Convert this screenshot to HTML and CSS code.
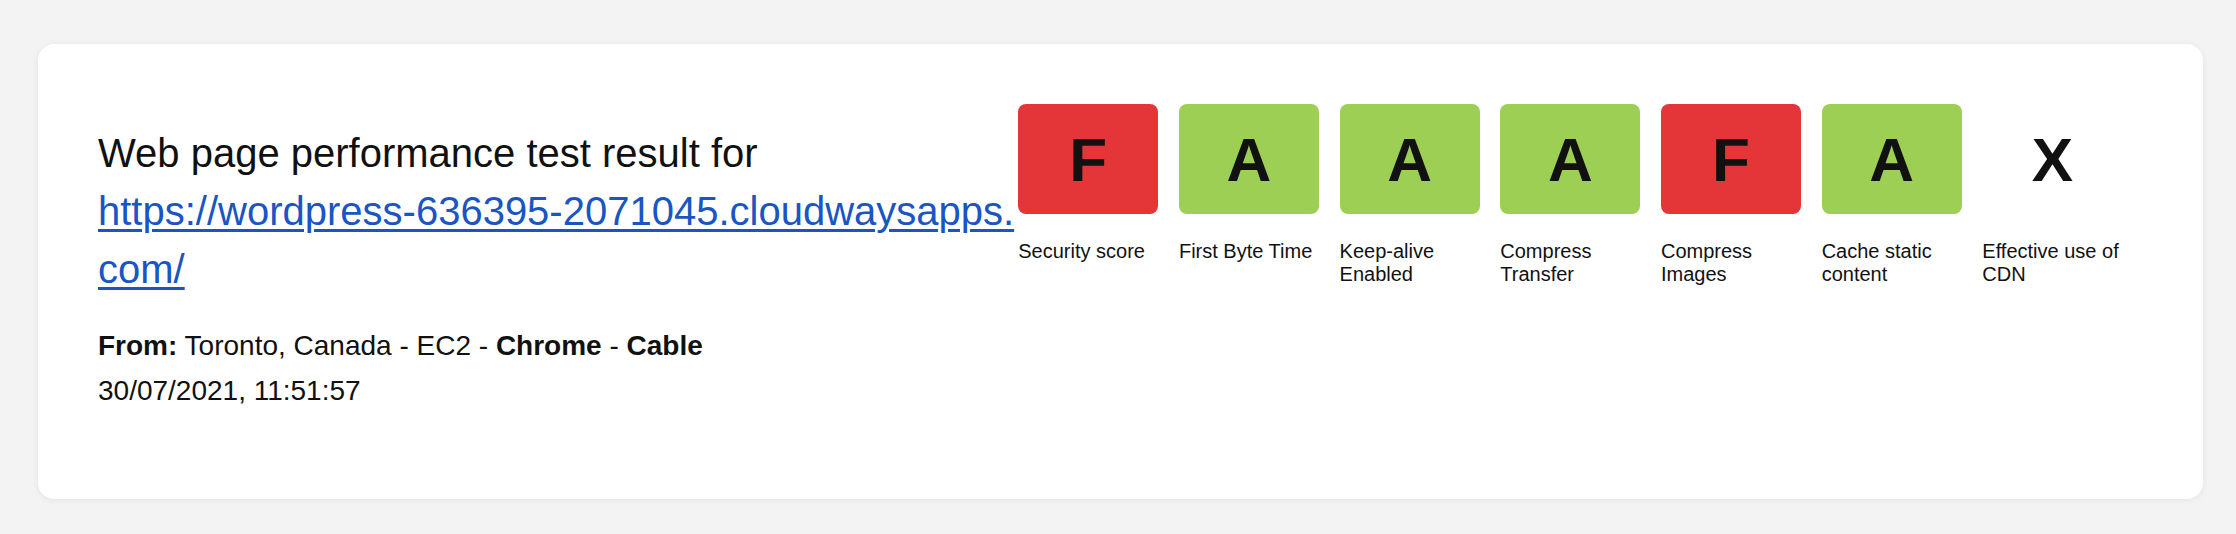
FILE: index.html
```html
<!DOCTYPE html>
<html lang="en">
<head>
<meta charset="utf-8">
<title>Web page performance test result</title>
<link rel="stylesheet" href="styles.css">
</head>
<body>
  <div class="card">
    <div class="info">
      <h1 class="title">Web page performance test result for<br><a class="url" href="#">https://wordpress-636395-2071045.cloudwaysapps.com/</a></h1>
      <p class="meta"><strong>From:</strong> Toronto, Canada - EC2 - <strong>Chrome</strong> - <strong>Cable</strong><br>30/07/2021, 11:51:57</p>
    </div>
    <ul class="grades">
      <li class="grade"><div class="box fail">F</div><div class="label">Security score</div></li>
      <li class="grade"><div class="box pass">A</div><div class="label">First Byte Time</div></li>
      <li class="grade"><div class="box pass">A</div><div class="label">Keep-alive Enabled</div></li>
      <li class="grade"><div class="box pass">A</div><div class="label">Compress Transfer</div></li>
      <li class="grade"><div class="box fail">F</div><div class="label">Compress Images</div></li>
      <li class="grade"><div class="box pass">A</div><div class="label">Cache static content</div></li>
      <li class="grade"><div class="box none">X</div><div class="label">Effective use of CDN</div></li>
    </ul>
  </div>
</body>
</html>
```
FILE: styles.css
```css
html, body {
  margin: 0;
  background: #f3f3f3;
}
body {
  padding: 44px 33px 35px 38px;
  font-family: "Liberation Sans", Arial, Helvetica, sans-serif;
  color: #111;
}
.card {
  background: #fff;
  border-radius: 16px;
  box-shadow: 0 1px 6px rgba(0, 0, 0, 0.07);
  padding: 60px;
  display: flex;
  align-items: flex-start;
  height: 335px;
}
.info {
  width: 45%;
  flex: none;
}
.title {
  margin: 20px 0 0;
  font-size: 40px;
  line-height: 58px;
  font-weight: normal;
}
.url {
  color: #1a55c4;
  text-decoration: underline;
  text-decoration-thickness: 3px;
  text-underline-offset: 4px;
  word-break: break-all;
}
.meta {
  margin: 25px 0 0;
  font-size: 28px;
  line-height: 45px;
}
.grades {
  flex: 1;
  list-style: none;
  margin: 0;
  padding: 0;
  display: grid;
  grid-template-columns: repeat(7, 1fr);
}
.box {
  width: 140px;
  height: 110px;
  border-radius: 8px;
  display: flex;
  align-items: center;
  justify-content: center;
  font-size: 62px;
  font-weight: bold;
  color: #111;
}
.fail { background: #e43538; }
.pass { background: #9ecf55; }
.none { background: transparent; }
.label {
  width: 140px;
  margin-top: 26px;
  font-size: 20px;
  line-height: 23px;
}
```
